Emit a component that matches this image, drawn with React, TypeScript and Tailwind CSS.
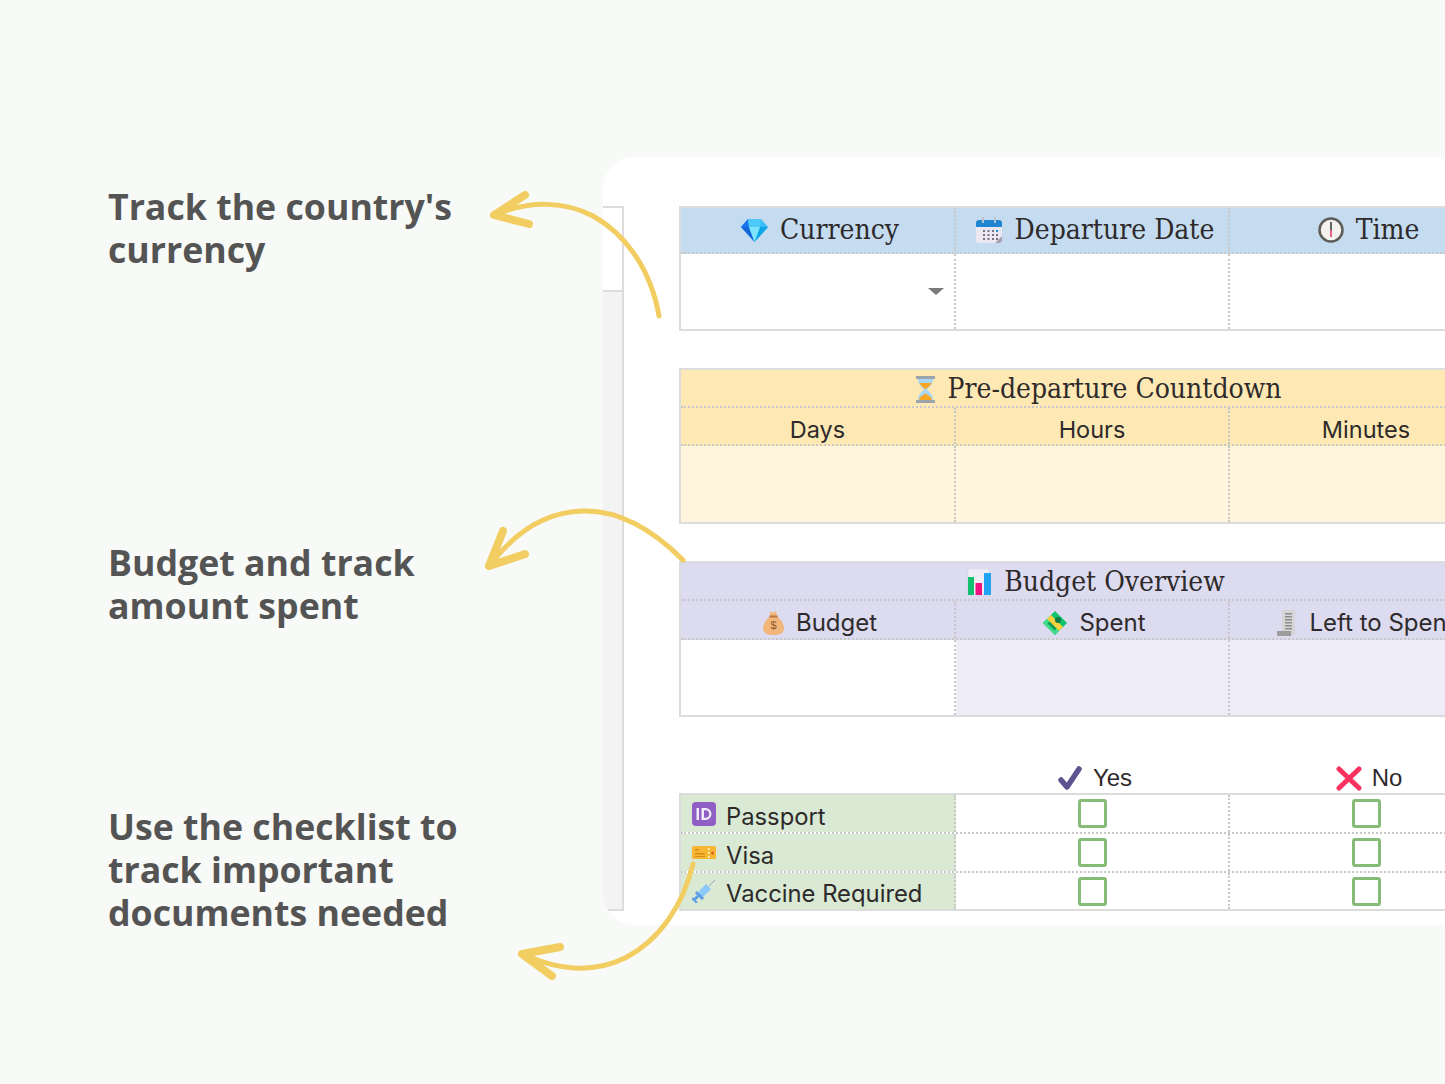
import type { ReactNode } from "react";

const slab = "font-['DejaVu_Serif_Condensed','DejaVu_Serif',serif]";
const sans = "font-['Inter',sans-serif]";

function Gem() {
  return (
    <svg width="27" height="24" viewBox="0 0 27 24">
      <path d="M7 1h13l7 8-13.500 15L0 9z" fill="#38bdf8" />
      <path d="M0 9l13.500 15L8 9z" fill="#1565d8" />
      <path d="M27 9L13.500 24 19 9z" fill="#0ea5e9" />
      <path d="M7 1L0 9h8z" fill="#1a73e8" />
      <path d="M8 9h11l-5.500 15z" fill="#7fe3fb" />
      <path d="M7 1h13l-1 8H8z" fill="#4cc9f7" />
    </svg>
  );
}

function Calendar() {
  return (
    <svg width="28" height="27" viewBox="0 0 28 27">
      <rect x="1" y="3" width="26" height="23" rx="3" fill="#ece8f2" />
      <path d="M1 10V6a3 3 0 0 1 3-3h20a3 3 0 0 1 3 3v4z" fill="#2086d4" />
      <rect x="7" y="0" width="2" height="6" fill="#b9c4d0" />
      <rect x="19" y="0" width="2" height="6" fill="#b9c4d0" />
      <path d="M20 26l7-7v4a3 3 0 0 1-3 3z" fill="#a79fb5" />
      {[8, 12.500, 17, 21].map((x) =>
        [13, 17, 21].map((y) => (
          <rect key={`${x}-${y}`} x={x} y={y} width="2" height="2" fill={x === 21 && y === 13 ? "#2086d4" : "#77727f"} />
        )),
      )}
    </svg>
  );
}

function Clock() {
  return (
    <svg width="26" height="26" viewBox="0 0 26 26">
      <circle cx="13" cy="13" r="11.500" fill="#f4f2ef" stroke="#5f5c58" strokeWidth="2.500" />
      <path d="M13 5v8" stroke="#333" strokeWidth="1.500" />
      <path d="M13 13v7" stroke="#e8325a" strokeWidth="1.500" />
    </svg>
  );
}

function Hourglass() {
  return (
    <svg width="21" height="27" viewBox="0 0 21 27">
      <path d="M3 3h15c0 6-4 8-6 10.500 2 2.500 6 4.500 6 10.500H3c0-6 4-8 6-10.500C7 11 3 9 3 3z" fill="#a9d6f2" />
      <path d="M4.500 7h12c-1 3-4.500 4.500-6 6.500-1.500-2-5-3.500-6-6.500z" fill="#f9a825" />
      <path d="M4 24c.5-3.500 4.500-5 6.500-6.500 2 1.500 6 3 6.500 6.500z" fill="#f9a825" />
      <rect x="1" y="0" width="19" height="3" fill="#9aa4ad" />
      <rect x="1" y="24" width="19" height="3" fill="#9aa4ad" />
    </svg>
  );
}

function BarChart() {
  return (
    <svg width="25" height="27" viewBox="0 0 25 27">
      <rect x="1" y="0" width="21" height="26" fill="#efeef6" stroke="#cfcddc" strokeWidth="0.500" />
      <rect x="1" y="8" width="6" height="18" fill="#12c26f" />
      <rect x="8.500" y="14" width="6.500" height="12" fill="#f0127f" />
      <rect x="17" y="4" width="7" height="22" fill="#20a4f3" />
    </svg>
  );
}

function MoneyBag() {
  return (
    <svg width="21" height="24" viewBox="0 0 21 24">
      <path d="M7 0l3 2 3-2 1 5c4 4 7 8 7 12 0 5-4 7-10.500 7S0 22 0 17c0-4 3-8 7-12z" fill="#f2b57a" />
      <rect x="6.500" y="4.500" width="8" height="2" fill="#b9783f" />
      <text x="10.500" y="18" textAnchor="middle" fontSize="11" fill="#8b5a2b" fontFamily="'Liberation Sans',sans-serif">$</text>
    </svg>
  );
}

function Cash() {
  return (
    <svg width="24" height="24" viewBox="0 0 24 24">
      <path d="M12 0l12 12-12 12L0 12z" fill="#12c26f" />
      <path d="M4 8l12 12-4 4L0 12z" fill="#3fdc8e" />
      <path d="M4 8l4-4 12 12-4 4z" fill="#f7d23e" />
      <circle cx="15" cy="9" r="3" fill="#0b7a45" />
      <path d="M4.500 12.500l2-2 7 7-2 2z" fill="#0f9a58" />
    </svg>
  );
}

function Receipt() {
  return (
    <svg width="20" height="27" viewBox="0 0 20 27">
      <rect x="5" y="0" width="13" height="25" fill="#d5d5d5" />
      <path d="M0 21h14v5H1a1 1 0 0 1-1-1z" fill="#9b9b9b" />
      {[3, 6, 9, 12, 15, 18].map((y) => (
        <rect key={y} x="8" y={y} width="7" height="1.500" fill="#8d8d8d" />
      ))}
    </svg>
  );
}

function IdBadge() {
  return (
    <svg width="24" height="24" viewBox="0 0 24 24">
      <rect width="24" height="24" rx="4" fill="#8f5fc4" />
      <rect x="4.500" y="6" width="2.500" height="12" fill="#f2ecfa" />
      <path d="M9.500 6h4a6 6 0 0 1 0 12h-4zM12 8.300v7.400h1.500a3.700 3.700 0 0 0 0-7.400z" fill="#f2ecfa" fillRule="evenodd" />
    </svg>
  );
}

function Ticket() {
  return (
    <svg width="24" height="14" viewBox="0 0 24 14">
      <rect y="0" width="24" height="13" rx="1.500" fill="#f7b733" />
      <rect x="3" y="3" width="4" height="1.500" fill="#d78a16" />
      <rect x="3" y="7" width="10" height="1.500" fill="#d78a16" />
      <rect x="3" y="10" width="10" height="1" fill="#d78a16" />
      <rect x="16" y="2" width="1.500" height="2" fill="#fff3cf" />
      <rect x="16" y="6" width="1.500" height="2" fill="#fff3cf" />
      <rect x="16" y="10" width="1.500" height="2" fill="#fff3cf" />
      <circle cx="20.500" cy="7" r="1.500" fill="#d9621e" />
    </svg>
  );
}

function Syringe() {
  return (
    <svg width="24" height="24" viewBox="0 0 24 24">
      <path d="M17 7L23 1" stroke="#9ba8b8" strokeWidth="1" />
      <path d="M7 12l7-7 5 5-7 7-4 1z" fill="#8cc8fb" />
      <path d="M4 13l7 7" stroke="#5b9ee8" strokeWidth="3" />
      <path d="M6 17l-4 4" stroke="#5b9ee8" strokeWidth="3" />
      <path d="M0 19l5 5" stroke="#5b9ee8" strokeWidth="2" />
    </svg>
  );
}

function Check() {
  return (
    <svg width="25" height="25" viewBox="0 0 25 25" className="shrink-0">
      <path d="M3 14l6 7L21 3" fill="none" stroke="#5f5290" strokeWidth="5.500" strokeLinecap="round" strokeLinejoin="round" />
    </svg>
  );
}

function Cross() {
  return (
    <svg width="26" height="25" viewBox="0 0 26 25" className="shrink-0">
      <path d="M3 3l20 19M23 3L3 22" fill="none" stroke="#f7325e" strokeWidth="5" strokeLinecap="round" />
    </svg>
  );
}

function Arrows() {
  return (
    <svg width="1445" height="1084" viewBox="0 0 1445 1084" className="absolute inset-0 pointer-events-none" fill="none" stroke="#f2cd62" strokeLinecap="round" strokeLinejoin="round">
      <path d="M659 316C650 265 622 232 593 216 565 201 530 201 500 213" strokeWidth="5" />
      <path d="M525 195L494 215 529 224" strokeWidth="8" />
      <path d="M683 560C655 532 620 510 583 511 548 512 518 530 494 560" strokeWidth="5" />
      <path d="M503 531L489 566 525 554" strokeWidth="8" />
      <path d="M693 864C683 905 660 940 625 958 590 975 555 968 530 957" strokeWidth="5" />
      <path d="M560 947L522 954 552 976" strokeWidth="8" />
    </svg>
  );
}

function Note({ className, children }: { className: string; children: ReactNode }) {
  return <p className={`text-[35.700px] leading-[43px] font-bold text-[#545454] font-['Open_Sans',sans-serif] ${className}`}>{children}</p>;
}

function Row({ className, children }: { className: string; children: ReactNode }) {
  return <div className={`flex w-[1100px] ${className}`}>{children}</div>;
}

function Cell({ className = "", children }: { className?: string; children?: ReactNode }) {
  return (
    <div className={`w-[274px] first:w-[275px] shrink-0 border-r-2 border-dotted border-[#c8c8c8] flex items-center justify-center ${className}`}>
      {children}
    </div>
  );
}

function Title({ icon, children }: { icon: ReactNode; children: ReactNode }) {
  return (
    <div className={`flex items-center gap-[12px] text-[28px] text-[#2e2a2b] whitespace-nowrap ${slab}`}>
      {icon}
      <span>{children}</span>
    </div>
  );
}

function Sub({ icon, size, children }: { icon?: ReactNode; size: string; children: ReactNode }) {
  return (
    <div className={`flex items-center gap-[12px] pt-[7px] whitespace-nowrap text-[#2e2a2b] ${size} ${sans}`}>
      {icon}
      <span>{children}</span>
    </div>
  );
}

function Box() {
  return <div className="w-[29px] h-[29px] rounded-[3px] border-[3px] border-[#86bb78] bg-white" />;
}

function ChecklistRow({ icon, label, last }: { icon: ReactNode; label: string; last?: boolean }) {
  const line = last ? "h-[36px]" : "h-[39px] border-b-2 border-dotted border-[#c8c8c8]";
  return (
    <Row className={line}>
      <div className="w-[275px] shrink-0 bg-[#d9e9d3] border-r-2 border-dotted border-[#c8c8c8] flex items-center gap-[10px] pl-[11px]">
        <span className="w-[24px] flex justify-center">{icon}</span>
        <span className={`pt-[6px] text-[23.800px] text-[#2e2a2b] whitespace-nowrap ${sans}`}>{label}</span>
      </div>
      <Cell><Box /></Cell>
      <Cell><Box /></Cell>
      <Cell><Box /></Cell>
    </Row>
  );
}

export default function App() {
  return (
    <div className="relative w-[1445px] h-[1084px] overflow-hidden bg-[#f8faf7] flex items-start">
      <div className="w-[603px] shrink-0 pl-[108px] pt-[185px]">
        <Note className="">Track the country's<br />currency</Note>
        <Note className="mt-[270px]">Budget and track<br />amount spent</Note>
        <Note className="mt-[178px]">Use the checklist to<br />track important<br />documents needed</Note>
      </div>

      <div className="mt-[157px] h-[768px] flex-1 min-w-0 flex bg-white rounded-l-[32px] overflow-hidden">
        {/* sliver of the sheet behind */}
        <div className="w-[21px] shrink-0 flex flex-col pt-[49px] pb-[14px]">
          <div className="h-[86px] border-t-2 border-r-2 border-b-2 border-[#dcdcdc] bg-white" />
          <div className="flex-1 border-r-2 border-b-2 border-[#dcdcdc] bg-[#f3f3f3]" />
        </div>

        <div className="pl-[55px] pt-[49px] min-w-0">
          <div className="border-2 border-[#dcdcdc] w-[1104px]">
            <Row className="h-[46px] bg-[#c5dcf0] border-b-2 border-dotted border-[#c8c8c8]">
              <Cell><div className="pl-[5px]"><Title icon={<Gem />}>Currency</Title></div></Cell>
              <Cell><div className="pl-[5px]"><Title icon={<Calendar />}>Departure Date</Title></div></Cell>
              <Cell><div className="pl-[5px]"><Title icon={<Clock />}>Time</Title></div></Cell>
              <Cell />
            </Row>
            <Row className="h-[75px]">
              <Cell className="justify-end pr-[10px]">
                <svg width="16" height="7" viewBox="0 0 16 7"><path d="M0 0h16L8 7z" fill="#7a7a7a" /></svg>
              </Cell>
              <Cell />
              <Cell />
              <Cell />
            </Row>
          </div>

          <div className="mt-[37px] border-2 border-[#dcdcdc] w-[1104px]">
            <div className="h-[38px] w-[1100px] bg-[#fee9b4] border-b-2 border-dotted border-[#c8c8c8] flex items-center">
              <div className="w-[834px] pt-[2px] flex justify-center">
                <Title icon={<Hourglass />}>Pre-departure Countdown</Title>
              </div>
            </div>
            <Row className="h-[38px] bg-[#fee9b4] border-b-2 border-dotted border-[#c8c8c8]">
              <Cell><Sub size="text-[23.500px]">Days</Sub></Cell>
              <Cell><Sub size="text-[23.500px]">Hours</Sub></Cell>
              <Cell><Sub size="text-[23.500px]">Minutes</Sub></Cell>
              <Cell />
            </Row>
            <Row className="h-[76px] bg-[#fff5dc]">
              <Cell /><Cell /><Cell /><Cell />
            </Row>
          </div>

          <div className="mt-[37px] border-2 border-[#dcdcdc] w-[1104px]">
            <div className="h-[38px] w-[1100px] bg-[#dddbef] border-b-2 border-dotted border-[#c8c8c8] flex items-center">
              <div className="w-[830px] pt-[2px] flex justify-center">
                <Title icon={<BarChart />}>Budget Overview</Title>
              </div>
            </div>
            <Row className="h-[39px] bg-[#dddbef] border-b-2 border-dotted border-[#c8c8c8]">
              <Cell className="pl-[5px]"><Sub size="text-[24px]" icon={<MoneyBag />}>Budget</Sub></Cell>
              <Cell className="pl-[5px]"><Sub size="text-[24px]" icon={<Cash />}>Spent</Sub></Cell>
              <Cell><Sub size="text-[24px]" icon={<Receipt />}>Left to Spent</Sub></Cell>
              <Cell />
            </Row>
            <Row className="h-[75px]">
              <Cell />
              <Cell className="bg-[#eeecf7]" />
              <Cell className="bg-[#eeecf7]" />
              <Cell />
            </Row>
          </div>

          <Row className="mt-[42px] h-[34px] ml-[2px]">
            <div className="w-[275px] shrink-0" />
            <div className="w-[274px] shrink-0 flex items-center justify-center gap-[10px] pl-[4px] pt-[4px] text-[24px] text-[#2e2a2b] font-['Liberation_Sans',sans-serif]">
              <Check /><span>Yes</span>
            </div>
            <div className="w-[274px] shrink-0 flex items-center justify-center gap-[10px] pl-[4px] pt-[4px] text-[24px] text-[#2e2a2b] font-['Liberation_Sans',sans-serif]">
              <Cross /><span>No</span>
            </div>
          </Row>
          <div className="border-2 border-[#dcdcdc] w-[1104px]">
            <ChecklistRow icon={<IdBadge />} label="Passport" />
            <ChecklistRow icon={<Ticket />} label="Visa" />
            <ChecklistRow icon={<Syringe />} label="Vaccine Required" last />
          </div>
        </div>
      </div>

      <Arrows />
    </div>
  );
}
